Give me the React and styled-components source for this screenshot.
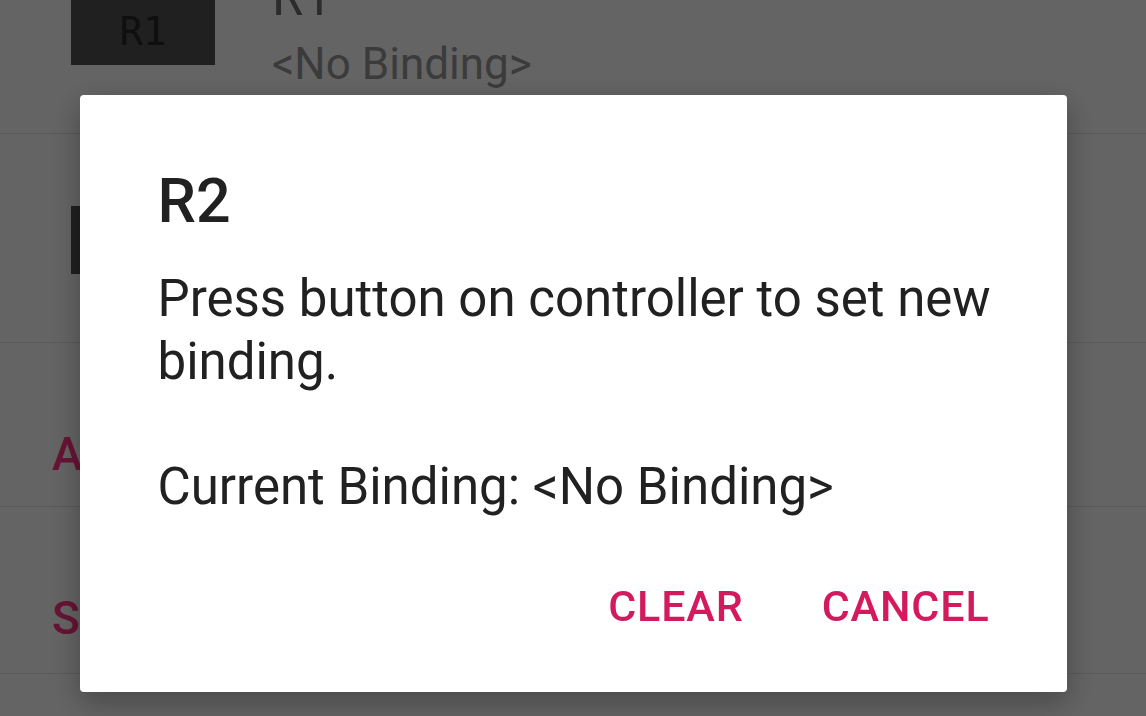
import React from "react";
import styled, { createGlobalStyle } from "styled-components";

const GlobalStyle = createGlobalStyle`
  html, body {
    margin: 0;
    padding: 0;
    background: #fafafa;
    font-family: Roboto, "Noto Sans", "Liberation Sans", sans-serif;
    overflow: hidden;
  }
  * { box-sizing: border-box; }
`;

const Page = styled.div`
  width: 1146px;
  height: 716px;
  overflow: hidden;
  background: #fafafa;
`;

const List = styled.div`
  display: flex;
  flex-direction: column;
  margin-top: -75px;
`;

const BindingRow = styled.div`
  display: flex;
  align-items: center;
  height: ${(p) => p.$height}px;
  padding-left: 71px;
  gap: 57px;
  border-bottom: 1px solid #e0e0e0;
`;

const KeyBox = styled.div`
  width: 144px;
  height: 68px;
  margin-top: 4px;
  background: #505050;
  color: #262626;
  display: flex;
  align-items: center;
  justify-content: center;
  font-family: "DejaVu Sans Mono", "Liberation Mono", monospace;
  font-size: 39px;
`;

const RowText = styled.div`
  display: flex;
  flex-direction: column;
`;

const RowTitle = styled.div`
  font-size: 51px;
  line-height: 60px;
  color: #6e6e6e;
`;

const RowSubtitle = styled.div`
  margin-top: 10px;
  font-size: 44px;
  line-height: 52px;
  color: #949494;
`;

const CategoryRow = styled.div`
  height: ${(p) => p.$height}px;
  padding: 83px 0 0 52px;
  border-bottom: 1px solid #e0e0e0;
  font-size: 46px;
  line-height: 56px;
  font-weight: 500;
  color: #ff3282;
`;

const Scrim = styled.div`
  position: fixed;
  inset: 0;
  background: rgba(0, 0, 0, 0.6);
  display: flex;
  flex-direction: column;
  align-items: center;
  padding-top: 95px;
`;

const Dialog = styled.div`
  width: 987px;
  height: 597px;
  background: #ffffff;
  border-radius: 4px;
  box-shadow: 0 10px 30px rgba(0, 0, 0, 0.3);
  display: flex;
  flex-direction: column;
  padding-top: 70px;
`;

const DialogTitle = styled.div`
  padding: 0 78px;
  font-size: 61px;
  line-height: 72px;
  font-weight: 500;
  color: #212121;
`;

const DialogBody = styled.div`
  margin-top: 31px;
  padding: 0 40px 0 78px;
  font-size: 51px;
  line-height: 62.5px;
  color: #212121;
  white-space: pre-line;
`;

const ButtonBar = styled.div`
  margin-top: 50px;
  display: flex;
  justify-content: flex-end;
  gap: 30px;
  padding: 0 53px 48px;
`;

const TextButton = styled.button`
  border: none;
  background: transparent;
  padding: 12px 24px;
  font-family: Roboto, "Noto Sans", sans-serif;
  font-size: 43px;
  line-height: 52px;
  font-weight: 500;
  letter-spacing: 0.02em;
  color: #d41a5e;
  text-transform: uppercase;
  cursor: pointer;
`;

export default function App() {
  return (
    <>
      <GlobalStyle />
      <Page>
        <List>
          <BindingRow $height={209}>
            <KeyBox>R1</KeyBox>
            <RowText>
              <RowTitle>R1</RowTitle>
              <RowSubtitle>&lt;No Binding&gt;</RowSubtitle>
            </RowText>
          </BindingRow>
          <BindingRow $height={209}>
            <KeyBox>R2</KeyBox>
            <RowText>
              <RowTitle>R2</RowTitle>
              <RowSubtitle>&lt;No Binding&gt;</RowSubtitle>
            </RowText>
          </BindingRow>
          <CategoryRow $height={164}>Axes</CategoryRow>
          <CategoryRow $height={167}>Settings</CategoryRow>
        </List>
      </Page>
      <Scrim>
        <Dialog role="dialog">
          <DialogTitle>R2</DialogTitle>
          <DialogBody>
            {"Press button on controller to set new binding.\n\nCurrent Binding: <No Binding>"}
          </DialogBody>
          <ButtonBar>
            <TextButton>Clear</TextButton>
            <TextButton>Cancel</TextButton>
          </ButtonBar>
        </Dialog>
      </Scrim>
    </>
  );
}
